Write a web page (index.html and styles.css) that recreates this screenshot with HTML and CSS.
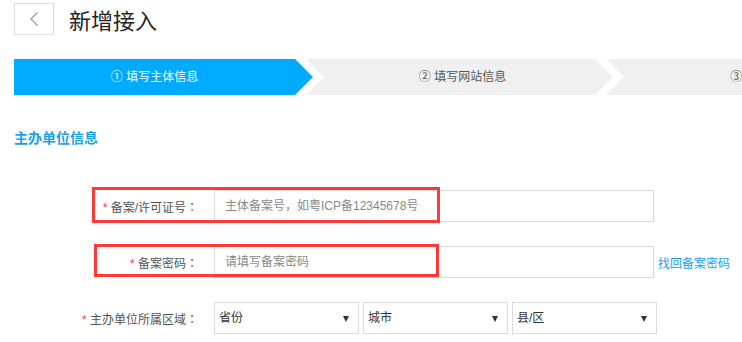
FILE: index.html
```
<!DOCTYPE html>
<html>
<head>
    <title>新增接入</title>
    <meta charset="UTF-8">
    <link rel="stylesheet" href="styles.css">
</head>
<body>

<div class="page">
    <div class="header">
        <a class="back" href="#">
            <svg width="8" height="14" viewBox="0 0 8 14"><polyline points="7.5,0.5 1,7 7.5,13.5" fill="none" stroke="#9a9a9a" stroke-width="1.2"/></svg>
        </a>
        <h1>新增接入</h1>
    </div>

    <div class="steps">
        <div class="step first active">① 填写主体信息</div>
        <div class="step second">② 填写网站信息</div>
        <div class="step third">③ 填写备案信息</div>
    </div>

    <h2 class="section-title">主办单位信息</h2>

    <div class="form">
        <div class="form-row">
            <label class="form-label"><span class="req">*</span> 备案/许可证号<span class="colon">：</span></label>
            <input class="form-input" type="text" placeholder="主体备案号，如粤ICP备12345678号">
        </div>
        <div class="form-row">
            <label class="form-label"><span class="req">*</span> 备案密码<span class="colon">：</span></label>
            <input class="form-input" type="text" placeholder="请填写备案密码">
            <a class="link" href="#">找回备案密码</a>
        </div>
        <div class="form-row">
            <label class="form-label"><span class="req">*</span> 主办单位所属区域<span class="colon">：</span></label>
            <div class="select">省份</div>
            <div class="select">城市</div>
            <div class="select">县/区</div>
        </div>
    </div>

    <!-- review marks -->
    <div class="mark mark-one"></div>
    <div class="mark mark-two"></div>
</div>

</body>
</html>
```

FILE: styles.css
```
html {
    box-sizing: border-box;
}
*, *:before, *:after {
    box-sizing: inherit;
}

body{
    margin: 0;
    font-family: "Liberation Sans", "Noto Sans CJK SC", sans-serif;
    font-size: 12px;
    color: #555;
    overflow: hidden;
}

.page{
    position: relative;
    padding-left: 14px;
}

.header{
    display: flex;
    align-items: center;
    padding-top: 3px;
}

.back{
    display: flex;
    align-items: center;
    justify-content: center;
    width: 40px;
    height: 32px;
    border: 1px solid #dcdcdc;
    background-color: #fff;
}

.header h1{
    margin: 0 0 0 15px;
    font-family: "Noto Sans CJK SC", sans-serif;
    font-weight: normal;
    font-size: 22px;
    line-height: 32px;
    color: #222;
}

.steps{
    display: flex;
    margin-top: 24px;
    height: 36px;
    overflow: hidden;
}

.step{
    flex: none;
    height: 36px;
    line-height: 36px;
    text-align: center;
    background-color: #f0f0f0;
    color: #555;
    font-size: 12px;
}

.step.active{
    background-color: #00aaff;
    color: #fff;
}

.step.first{
    width: 299px;
    padding-right: 18px;
    clip-path: polygon(0 0, 281px 0, 299px 18px, 281px 36px, 0 36px);
}

.step.second{
    width: 307px;
    margin-left: -7px;
    padding-left: 21px;
    padding-right: 15px;
    clip-path: polygon(0 0, 289px 0, 307px 18px, 289px 36px, 0 36px, 18px 18px);
}

.step.third{
    width: 336px;
    margin-left: -7px;
    padding-left: 23px;
    padding-right: 23px;
    clip-path: polygon(0 0, 318px 0, 336px 18px, 318px 36px, 0 36px, 18px 18px);
}

.section-title{
    margin: 33px 0 0 0;
    font-size: 14px;
    line-height: 20px;
    font-weight: bold;
    color: #1aa0f0;
}

.form{
    margin-top: 42px;
}

.form-row{
    display: flex;
    align-items: center;
    height: 32px;
    margin-bottom: 24px;
}

.form-label{
    width: 200px;
    padding-right: 16px;
    text-align: right;
    color: #555;
}

.colon{
    font-family: "Noto Sans CJK TC", sans-serif;
}

.req{
    color: #f33;
}

.form-input{
    width: 440px;
    height: 32px;
    border: 1px solid #dadada;
    padding: 0 10px;
    font-family: inherit;
    font-size: 12px;
    outline: none;
}

.form-input::placeholder{
    color: #888;
}

.link{
    margin-left: 4px;
    color: #1a9ff5;
    text-decoration: none;
}

.select{
    position: relative;
    width: 145px;
    height: 32px;
    margin-right: 4px;
    border: 1px solid #dadada;
    padding-left: 4px;
    line-height: 30px;
    color: #333;
}

.select:after{
    content: "";
    position: absolute;
    right: 9px;
    top: 13px;
    border-left: 3.5px solid transparent;
    border-right: 3.5px solid transparent;
    border-top: 6px solid #333;
}

.mark{
    position: absolute;
    border: 3px solid #ff3838;
}

.mark-one{
    left: 92px;
    top: 187px;
    width: 348px;
    height: 36px;
}

.mark-two{
    left: 94px;
    top: 244px;
    width: 345px;
    height: 33px;
}
```
